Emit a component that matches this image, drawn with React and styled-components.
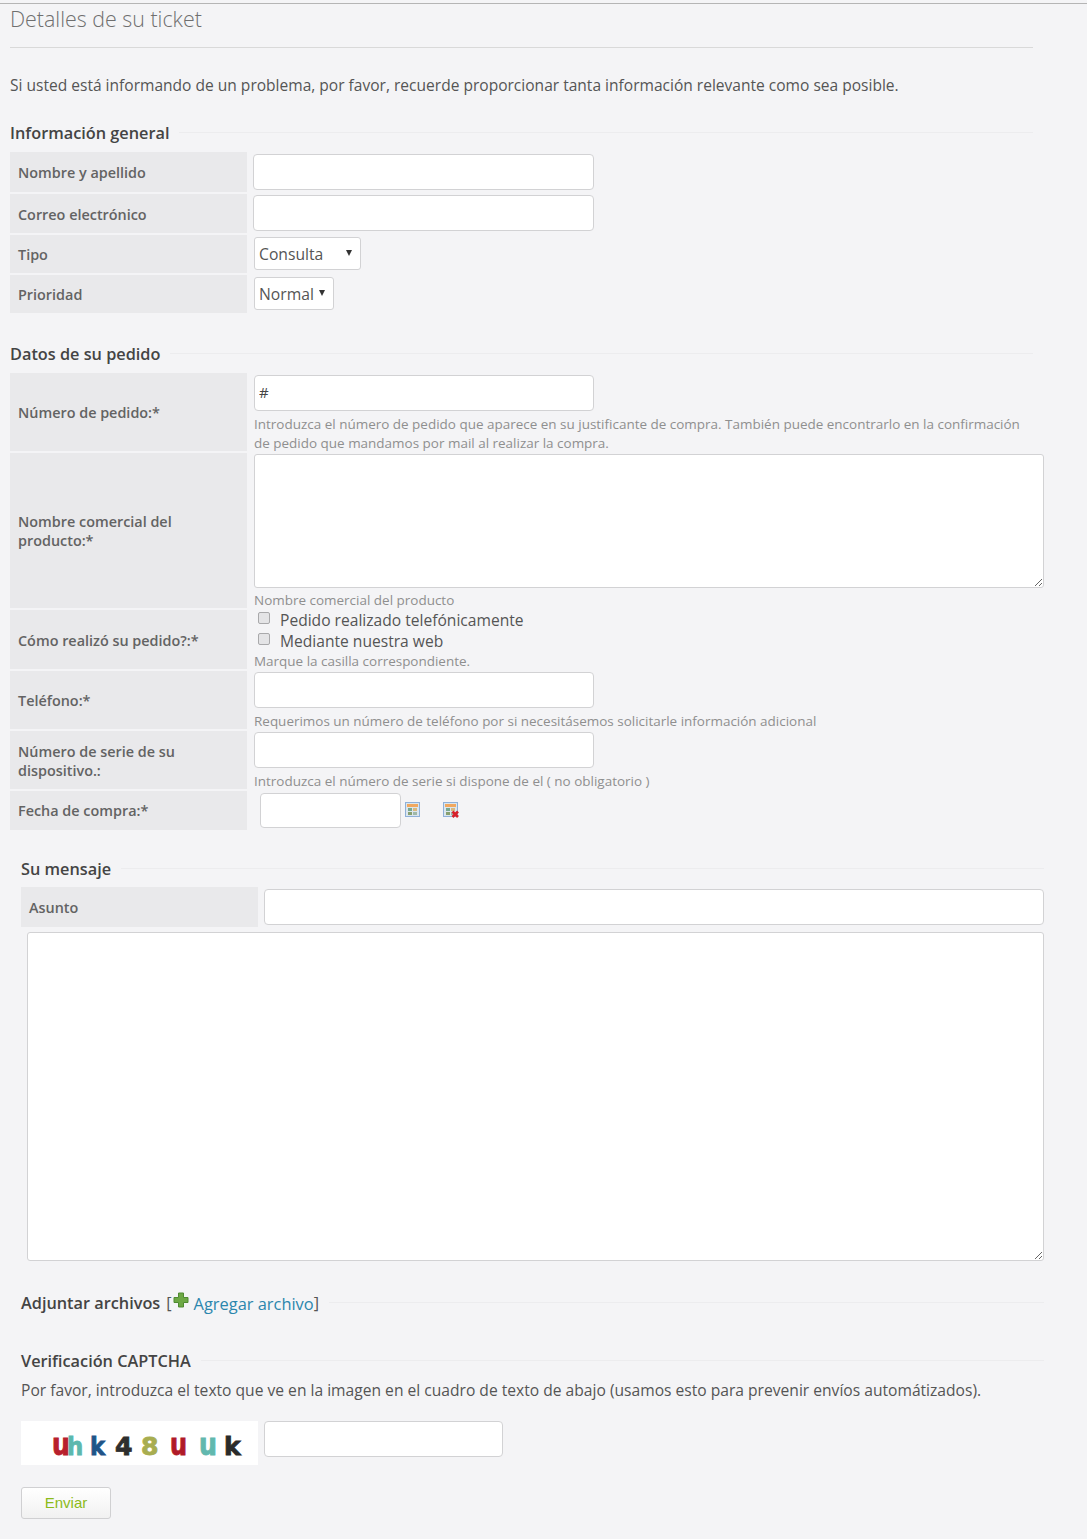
import styled, { createGlobalStyle } from 'styled-components';

const GlobalStyle = createGlobalStyle`
  html, body {
    margin: 0;
    padding: 0;
    background: #f4f4f6;
  }
  * {
    box-sizing: border-box;
  }
`;

const Page = styled.div`
  width: 1087px;
  height: 1539px;
  overflow: hidden;
  background: #f4f4f6;
  border-top: 1px solid #b5b5b5;
  margin-top: 3px;
  font-family: "Open Sans", "Noto Sans", sans-serif;
  color: #555;
`;

const Title = styled.h1`
  margin: 0 54px 0 10px;
  height: 44px;
  border-bottom: 1px solid #d9d9d9;
  font-size: 21.4px;
  line-height: 29px;
  font-weight: 300;
  color: #6f6f6f;
`;

const Intro = styled.p`
  margin: 26px 0 0 10px;
  font-size: 15.55px;
  line-height: 22px;
  color: #555;
`;

const Section = styled.section`
  margin: ${(p) => p.$top}px ${(p) => (p.$inset ? 43 : 54)}px 0 ${(p) => (p.$inset ? 21 : 10)}px;
`;

const Legend = styled.div`
  display: flex;
  align-items: center;
  height: 22px;
  padding-top: 2px;
  font-size: 16.3px;
  font-weight: 600;
  color: #444;
  white-space: nowrap;
  &::after {
    content: '';
    flex: 1;
    height: 1px;
    margin: -2px 0 0 10px;
    background: #ececee;
  }
`;

const Rows = styled.div`
  display: flex;
  flex-direction: column;
  gap: 2px;
  margin-top: ${(p) => p.$top ?? 9}px;
  margin-right: ${(p) => (p.$wide ? -11 : 0)}px;
`;

const Row = styled.div`
  display: flex;
  min-height: ${(p) => p.$height}px;
`;

const Label = styled.div`
  flex: none;
  display: flex;
  align-items: center;
  width: 237px;
  padding: ${(p) => (p.$down ? 2 : 0)}px 30px 0 8px;
  background: #e9e9eb;
  font-size: 14.4px;
  font-weight: 600;
  line-height: 19px;
  color: #636363;
`;

const Cell = styled.div`
  flex: 1;
  display: flex;
  flex-direction: column;
  align-items: flex-start;
  padding-left: ${(p) => p.$left ?? 7}px;
  padding-top: ${(p) => p.$top ?? 0}px;
`;

const TextInput = styled.input`
  display: block;
  flex: none;
  width: ${(p) => p.$width}px;
  height: ${(p) => p.$height ?? 36}px;
  padding: 0 4px 2px;
  background: #fff;
  border: 1px solid #d2d2d4;
  border-radius: 4px;
  font-family: inherit;
  font-size: 15px;
  color: #444;
`;

const TextArea = styled.textarea`
  display: block;
  width: ${(p) => p.$width}px;
  height: ${(p) => p.$height}px;
  background: #fff;
  border: 1px solid #d2d2d4;
  border-radius: 3px;
  resize: vertical;
`;

const SelectBox = styled.div`
  position: relative;
  display: flex;
  align-items: center;
  width: ${(p) => p.$width}px;
  height: 33px;
  margin-top: 2px;
  padding-left: 4px;
  background: #fff;
  border: 1px solid #d2d2d4;
  border-radius: 3px;
  font-size: 15.7px;
  color: #555;
  &::after {
    content: '';
    position: absolute;
    top: 12px;
    right: 8px;
    border-left: 3px solid transparent;
    border-right: 3px solid transparent;
    border-top: 6px solid #333;
  }
`;

const Hint = styled.div`
  margin: ${(p) => p.$gap ?? 4}px 0 ${(p) => -(p.$gap ?? 4) - (p.$gap === 0 ? 2 : 0)}px;
  max-width: 775px;
  font-size: 13.47px;
  line-height: 19px;
  color: #8f8f8f;
`;

const CheckLine = styled.label`
  display: flex;
  align-items: center;
  height: 21px;
  padding: 0 0 2px 4px;
  font-size: 15.6px;
  color: #555;
`;

const CheckBox = styled.span`
  width: 12px;
  height: 12px;
  margin: -3px 10px 0 0;
  background: #e4e4e6;
  border: 1px solid #a9a9ab;
  border-radius: 2px;
`;

const DateTools = styled.div`
  display: flex;
  align-items: flex-start;
  height: 39px;
  padding: 2px 0 0 13px;
`;

const CalendarButton = styled.svg`
  flex: none;
  width: 16px;
  height: 17px;
  margin: 8px 0 0 ${(p) => p.$gap}px;
`;

const Bracket = styled.span`
  margin-left: ${(p) => p.$left ?? 0}px;
  font-weight: 400;
  color: #555;
`;

const AddLink = styled.a`
  margin-left: 5px;
  font-size: 16.4px;
  font-weight: 400;
  color: #2b86ad;
  text-decoration: none;
`;

const PlusIcon = styled.svg`
  width: 16px;
  height: 16px;
  margin: -6px 0 0 1px;
  vertical-align: middle;
`;

const Note = styled.p`
  margin: 8px 0 0;
  font-size: 15.62px;
  line-height: 22px;
  color: #555;
`;

const CaptchaRow = styled.div`
  display: flex;
  gap: 6px;
  margin-top: 20px;
`;

const CaptchaImage = styled.div`
  display: flex;
  align-items: center;
  width: 237px;
  height: 44px;
  padding: 8px 0 0 31px;
  background: #fff;
  font-family: "DejaVu Sans", sans-serif;
  font-size: 24px;
  font-weight: 700;
  line-height: 1;
`;

const CaptchaChar = styled.span`
  display: inline-block;
  width: ${(p) => p.$w}px;
  color: ${(p) => p.$color};
  -webkit-text-stroke: 0.8px ${(p) => p.$color};
  transform: scale(${(p) => p.$sx ?? 1}, ${(p) => p.$sy ?? 1});
  transform-origin: 0 80%;
`;

const SubmitButton = styled.button`
  display: block;
  width: 90px;
  height: 32px;
  margin-top: 22px;
  padding: 0 0 2px;
  background: linear-gradient(#fff, #f1f1f1);
  border: 1px solid #d0d0d2;
  border-radius: 3px;
  font-family: "Liberation Sans", Arial, sans-serif;
  font-size: 15px;
  color: #8cbb1a;
`;

const Calendar = ({ gap, remove }) => (
  <CalendarButton $gap={gap} viewBox="0 0 16 17">
    <rect x="0.5" y="1.5" width="14" height="14" fill="#dbe6ee" stroke="#8fb0d8" />
    <rect x="2" y="3" width="11" height="3" fill="#f0a860" />
    <rect x="3" y="7" width="4" height="3" fill="#78a890" />
    <rect x="8" y="7" width="4" height="3" fill="#d8b880" />
    <rect x="3" y="11" width="4" height="3" fill="#88a070" />
    <rect x="8" y="11" width="4" height="3" fill="#a0b8a8" />
    {remove && <path d="M9.5 10.5l5.5 5.5M15 10.5l-5.5 5.5" stroke="#d8202a" strokeWidth="2.6" />}
  </CalendarButton>
);

const captcha = [
  ['u', '#b8202c', 15, 1.05, 1.25],
  ['h', '#5cb8ae', 23, 0.95, 1.05],
  ['k', '#1f5488', 25, 0.95, 1.05],
  ['4', '#2e2e2e', 26, 1.05, 1],
  ['8', '#a8ad50', 29, 1.05, 1],
  ['u', '#b01a28', 29, 1, 1.25],
  ['u', '#62b8ae', 25, 1.05, 1.25],
  ['k', '#2a2a2a', 20, 1.05, 1],
];

const TextAreaWrap = styled.div`
  margin: 5px 0 0 6px;
`;

const App = () => (
  <Page>
    <GlobalStyle />
    <Title>Detalles de su ticket</Title>
    <Intro>Si usted está informando de un problema, por favor, recuerde proporcionar tanta información relevante como sea posible.</Intro>

    <Section $top={25}>
      <Legend>Información general</Legend>
      <Rows>
        <Row $height={40}>
          <Label>Nombre y apellido</Label>
          <Cell $left={6} $top={2}><TextInput $width={341} /></Cell>
        </Row>
        <Row $height={39}>
          <Label $down>Correo electrónico</Label>
          <Cell $left={6} $top={1}><TextInput $width={341} /></Cell>
        </Row>
        <Row $height={38}>
          <Label>Tipo</Label>
          <Cell><SelectBox $width={107}>Consulta</SelectBox></Cell>
        </Row>
        <Row $height={38}>
          <Label>Prioridad</Label>
          <Cell><SelectBox $width={80}>Normal</SelectBox></Cell>
        </Row>
      </Rows>
    </Section>

    <Section $top={29}>
      <Legend>Datos de su pedido</Legend>
      <Rows $wide>
        <Row $height={78}>
          <Label>Número de pedido:*</Label>
          <Cell $top={2}>
            <TextInput $width={340} defaultValue="#" />
            <Hint>Introduzca el número de pedido que aparece en su justificante de compra. También puede encontrarlo en la confirmación de pedido que mandamos por mail al realizar la compra.</Hint>
          </Cell>
        </Row>
        <Row $height={155}>
          <Label>Nombre comercial del producto:*</Label>
          <Cell $top={1}>
            <TextArea $width={790} $height={134} />
            <Hint $gap={3}>Nombre comercial del producto</Hint>
          </Cell>
        </Row>
        <Row $height={59}>
          <Label $down>Cómo realizó su pedido?:*</Label>
          <Cell>
            <CheckLine><CheckBox />Pedido realizado telefónicamente</CheckLine>
            <CheckLine><CheckBox />Mediante nuestra web</CheckLine>
            <Hint $gap={0}>Marque la casilla correspondiente.</Hint>
          </Cell>
        </Row>
        <Row $height={58}>
          <Label>Teléfono:*</Label>
          <Cell $top={1}>
            <TextInput $width={340} />
            <Hint>Requerimos un número de teléfono por si necesitásemos solicitarle información adicional</Hint>
          </Cell>
        </Row>
        <Row $height={58}>
          <Label $down>Número de serie de su dispositivo.:</Label>
          <Cell $top={1}>
            <TextInput $width={340} />
            <Hint>Introduzca el número de serie si dispone de el ( no obligatorio )</Hint>
          </Cell>
        </Row>
        <Row $height={39}>
          <Label>Fecha de compra:*</Label>
          <DateTools>
            <TextInput $width={141} $height={35} />
            <Calendar gap={4} />
            <Calendar gap={22} remove />
          </DateTools>
        </Row>
      </Rows>
    </Section>

    <Section $top={27} $inset>
      <Legend>Su mensaje</Legend>
      <Rows $top={8}>
        <Row $height={40}>
          <Label>Asunto</Label>
          <Cell $left={6} $top={2}><TextInput $width={780} /></Cell>
        </Row>
      </Rows>
      <TextAreaWrap>
        <TextArea $width={1017} $height={329} />
      </TextAreaWrap>
    </Section>

    <Section $top={30} $inset>
      <Legend>
        Adjuntar archivos
        <Bracket $left={6}>[</Bracket>
        <PlusIcon viewBox="0 0 16 16">
          <path d="M5.5 1h5v4.5H15v5h-4.5V15h-5v-4.5H1v-5h4.5z" fill="#6ea845" stroke="#4f8a30" />
        </PlusIcon>
        <AddLink>Agregar archivo</AddLink>
        <Bracket>]</Bracket>
      </Legend>
    </Section>

    <Section $top={36} $inset>
      <Legend>Verificación CAPTCHA</Legend>
      <Note>Por favor, introduzca el texto que ve en la imagen en el cuadro de texto de abajo (usamos esto para prevenir envíos automátizados).</Note>
      <CaptchaRow>
        <CaptchaImage>
          {captcha.map(([c, color, w, sx, sy], i) => (
            <CaptchaChar key={i} $color={color} $w={w} $sx={sx} $sy={sy}>{c}</CaptchaChar>
          ))}
        </CaptchaImage>
        <TextInput $width={239} />
      </CaptchaRow>
      <SubmitButton>Enviar</SubmitButton>
    </Section>
  </Page>
);

export default App;
